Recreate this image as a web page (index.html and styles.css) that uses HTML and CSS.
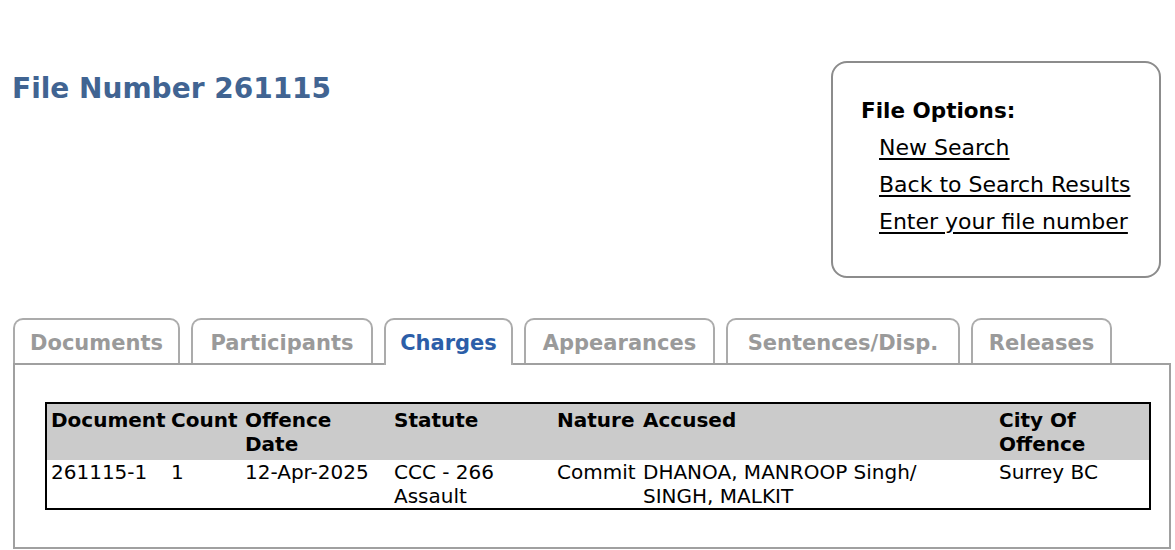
FILE: index.html
```html
<!DOCTYPE html>
<html lang="en">
<head>
    <meta charset="UTF-8">
    <title>File Number 261115</title>
    <link rel="stylesheet" href="styles.css">
</head>
<body>
    <div class="page">
        <div class="file-header">
            <h1 class="file-title">File Number 261115</h1>
            <div class="file-options">
                <div class="options-title">File Options:</div>
                <a href="#" class="option-link">New Search</a>
                <a href="#" class="option-link">Back to Search Results</a>
                <a href="#" class="option-link">Enter your file number</a>
            </div>
        </div>

        <!-- tabs -->
        <div class="tab-bar">
            <a href="#" class="tab tab-documents">Documents</a>
            <a href="#" class="tab tab-participants">Participants</a>
            <a href="#" class="tab tab-charges active">Charges</a>
            <a href="#" class="tab tab-appearances">Appearances</a>
            <a href="#" class="tab tab-sentences">Sentences/Disp.</a>
            <a href="#" class="tab tab-releases">Releases</a>
        </div>

        <div class="tab-panel">
            <table class="charges">
                <colgroup>
                    <col class="col-document">
                    <col class="col-count">
                    <col class="col-date">
                    <col class="col-statute">
                    <col class="col-nature">
                    <col class="col-accused">
                    <col>
                </colgroup>
                <thead>
                    <tr>
                        <th>Document</th>
                        <th>Count</th>
                        <th>Offence Date</th>
                        <th>Statute</th>
                        <th>Nature</th>
                        <th>Accused</th>
                        <th>City Of Offence</th>
                    </tr>
                </thead>
                <tbody>
                    <tr>
                        <td>261115-1</td>
                        <td>1</td>
                        <td>12-Apr-2025</td>
                        <td>CCC - 266<br>Assault</td>
                        <td>Commit</td>
                        <td>DHANOA, MANROOP Singh/<br>SINGH, MALKIT</td>
                        <td>Surrey BC</td>
                    </tr>
                </tbody>
            </table>
        </div>
    </div>
</body>
</html>
```

FILE: styles.css
```css
body {
    margin: 0;
    font-family: "DejaVu Sans", Verdana, sans-serif;
    color: #000;
    background-color: #fff;
}
.page {
    padding: 61px 4px 0 13px;
}
.file-header {
    display: flex;
    justify-content: space-between;
    align-items: flex-start;
}
.file-title {
    margin: 11px 0 0 -1px;
    font-size: 28px;
    line-height: 34px;
    font-weight: bold;
    color: #416492;
}
.file-options {
    width: 330px;
    height: 217px;
    box-sizing: border-box;
    margin-right: 10px;
    padding: 29px 0 0 28px;
    border: 2px solid #8c8c8c;
    border-radius: 16px;
    font-size: 22px;
    line-height: 37px;
}
.options-title {
    font-weight: bold;
    font-size: 21.5px;
}
.option-link {
    display: block;
    margin-left: 18px;
    color: #000;
    text-decoration: underline;
    text-underline-offset: 3px;
    width: fit-content;
}
.tab-bar {
    display: flex;
    gap: 11px;
    margin-top: 40px;
    margin-bottom: -2px;
    position: relative;
    z-index: 1;
}
.tab {
    display: flex;
    align-items: center;
    justify-content: center;
    height: 45px;
    padding-top: 2px;
    box-sizing: border-box;
    border: 2px solid #ababab;
    border-bottom: none;
    border-radius: 10px 10px 0 0;
    font-size: 21px;
    font-weight: bold;
    color: #9a9a9a;
    text-decoration: none;
    background-color: #fff;
}
.tab.active {
    height: 47px;
    padding-bottom: 2px;
    color: #2c5ea8;
}
.tab-documents { width: 167px; }
.tab-participants { width: 182px; }
.tab-charges { width: 129px; }
.tab-appearances { width: 191px; }
.tab-sentences { width: 234px; }
.tab-releases { width: 141px; }
.tab-panel {
    border: 2px solid #a0a0a0;
    padding: 37px 18px 37px 30px;
}
.charges {
    width: 100%;
    table-layout: fixed;
    border-collapse: collapse;
    border: 2px solid #000;
    font-size: 20px;
    line-height: 24px;
}
.col-document { width: 121px; }
.col-count { width: 74px; }
.col-date { width: 149px; }
.col-statute { width: 163px; }
.col-nature { width: 86px; }
.col-accused { width: 356px; }
.charges th {
    background-color: #cbcbcb;
    text-align: left;
    vertical-align: top;
    padding: 4px;
}
.charges td {
    vertical-align: top;
    padding: 0 4px;
}
```
